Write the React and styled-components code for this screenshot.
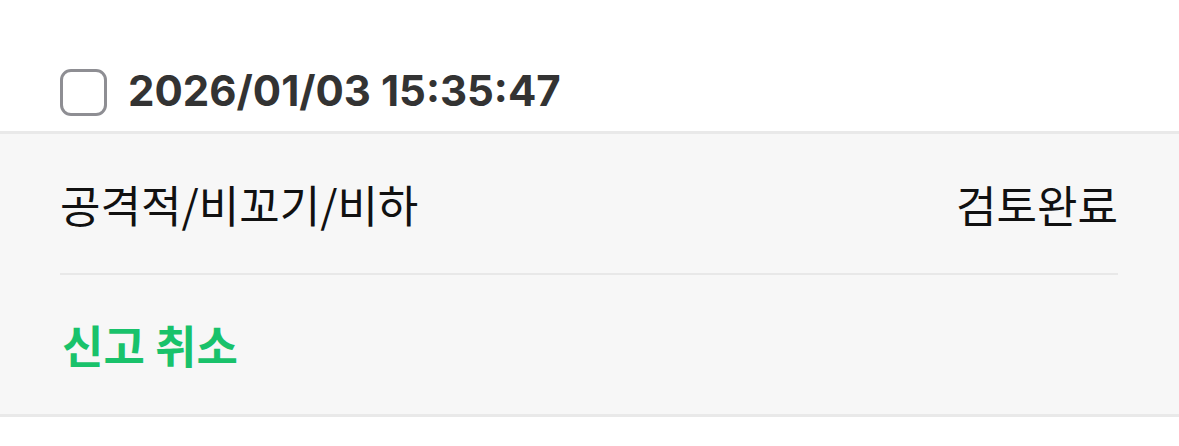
import React, { useState } from "react";
import styled, { createGlobalStyle } from "styled-components";

const GlobalStyle = createGlobalStyle`
  html, body {
    margin: 0;
    padding: 0;
    background: #ffffff;
    font-family: Inter, "Noto Sans CJK KR", sans-serif;
  }
`;

const Item = styled.div`
  width: 100%;
`;

const Header = styled.div`
  display: flex;
  align-items: center;
  gap: 21px;
  height: 131px;
  padding: 53px 60px 0;
  box-sizing: border-box;
`;

const Check = styled.button`
  width: 47px;
  height: 47px;
  box-sizing: border-box;
  border: 3.5px solid ${(p) => (p.$on ? "#19c26b" : "#8e8e93")};
  background: ${(p) => (p.$on ? "#19c26b" : "transparent")};
  border-radius: 11px;
  padding: 0;
  cursor: pointer;
`;

const Stamp = styled.span`
  font-family: Inter, sans-serif;
  font-weight: 700;
  font-size: 42px;
  color: #333333;
  margin-top: -4px;
`;

const Panel = styled.div`
  background: #f7f7f7;
  border-top: 3px solid #e9e9e9;
  border-bottom: 3px solid #e9e9e9;
  padding: 0 61px 0 60px;
`;

const Row = styled.div`
  display: flex;
  align-items: center;
  justify-content: space-between;
  height: ${(p) => p.$h}px;
  border-bottom: ${(p) => (p.$line ? "2px solid #e8e8e8" : "none")};
  font-family: "Noto Sans CJK KR", sans-serif;
  font-size: 44px;
  color: #111111;
`;

const Cancel = styled.button`
  border: none;
  background: none;
  padding: 0 0 0 2px;
  font-family: "Noto Sans CJK KR", sans-serif;
  font-weight: 700;
  font-size: 45px;
  color: #19c26b;
  cursor: pointer;
`;

export default function App() {
  const [on, setOn] = useState(false);
  return (
    <Item>
      <GlobalStyle />
      <Header>
        <Check $on={on} onClick={() => setOn(!on)} />
        <Stamp>2026/01/03 15:35:47</Stamp>
      </Header>
      <Panel>
        <Row $h={139} $line>
          <span>공격적/비꼬기/비하</span>
          <span>검토완료</span>
        </Row>
        <Row $h={139}>
          <Cancel>신고 취소</Cancel>
        </Row>
      </Panel>
    </Item>
  );
}
